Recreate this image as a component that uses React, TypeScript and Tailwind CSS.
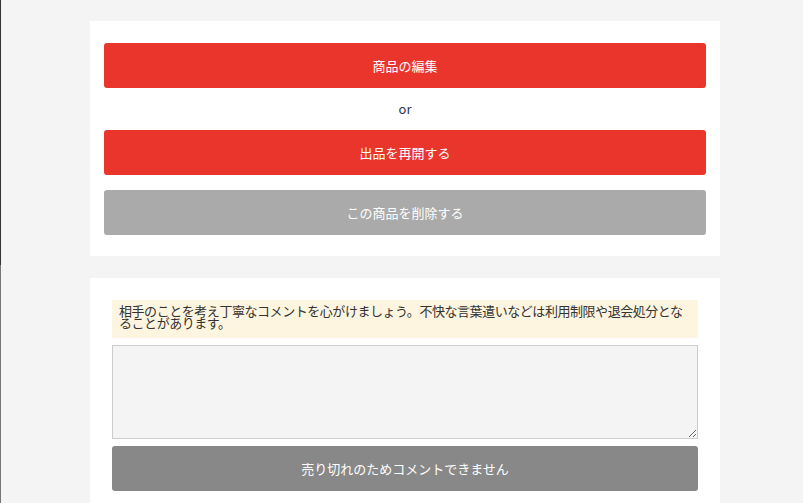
import React from "react";

export default function App() {
  return (
    <div
      className="relative w-[803px] h-[503px] overflow-hidden bg-[#f4f4f4]"
      style={{ fontFamily: '"Noto Sans CJK JP", "Noto Sans", sans-serif' }}
    >
      <div className="absolute left-0 top-0 w-px h-[265px] bg-[#333]" />
      <div className="absolute left-0 top-[265px] w-px h-[238px] bg-[#777]" />
      <div className="flex flex-col gap-[22px] pt-[21px] pl-[90px] w-[720px]">
        <div className="bg-white px-[14px] pt-[22px] pb-[21px] flex flex-col">
          <button className="h-[45px] w-full rounded-[3px] bg-[#ea352d] text-white text-[13px]">
            商品の編集
          </button>
          <div className="h-[42px] flex items-center justify-center text-[13px] text-[#2a3350]">
            or
          </div>
          <button className="h-[45px] w-full rounded-[3px] bg-[#ea352d] text-white text-[13px]">
            出品を再開する
          </button>
          <button className="mt-[15px] h-[45px] w-full rounded-[3px] bg-[#aaaaaa] text-white text-[13px]">
            この商品を削除する
          </button>
        </div>
        <div className="bg-white px-[22px] pt-[22px] pb-[20px] flex flex-col">
          <div className="bg-[#fdf5df] px-[7px] pt-[5px] pb-[9px] text-[13px] leading-[12px] tracking-[-0.45px] text-[#333]">
            相手のことを考え丁寧なコメントを心がけましょう。不快な言葉遣いなどは利用制限や退会処分となることがあります。
          </div>
          <textarea
            className="mt-[7px] h-[94px] w-full bg-[#f4f4f4] border border-[#cccccc] resize-y block"
            readOnly
          />
          <button className="mt-[7px] h-[45px] w-full rounded-[3px] bg-[#888888] text-white text-[13px]">
            売り切れのためコメントできません
          </button>
        </div>
      </div>
    </div>
  );
}
